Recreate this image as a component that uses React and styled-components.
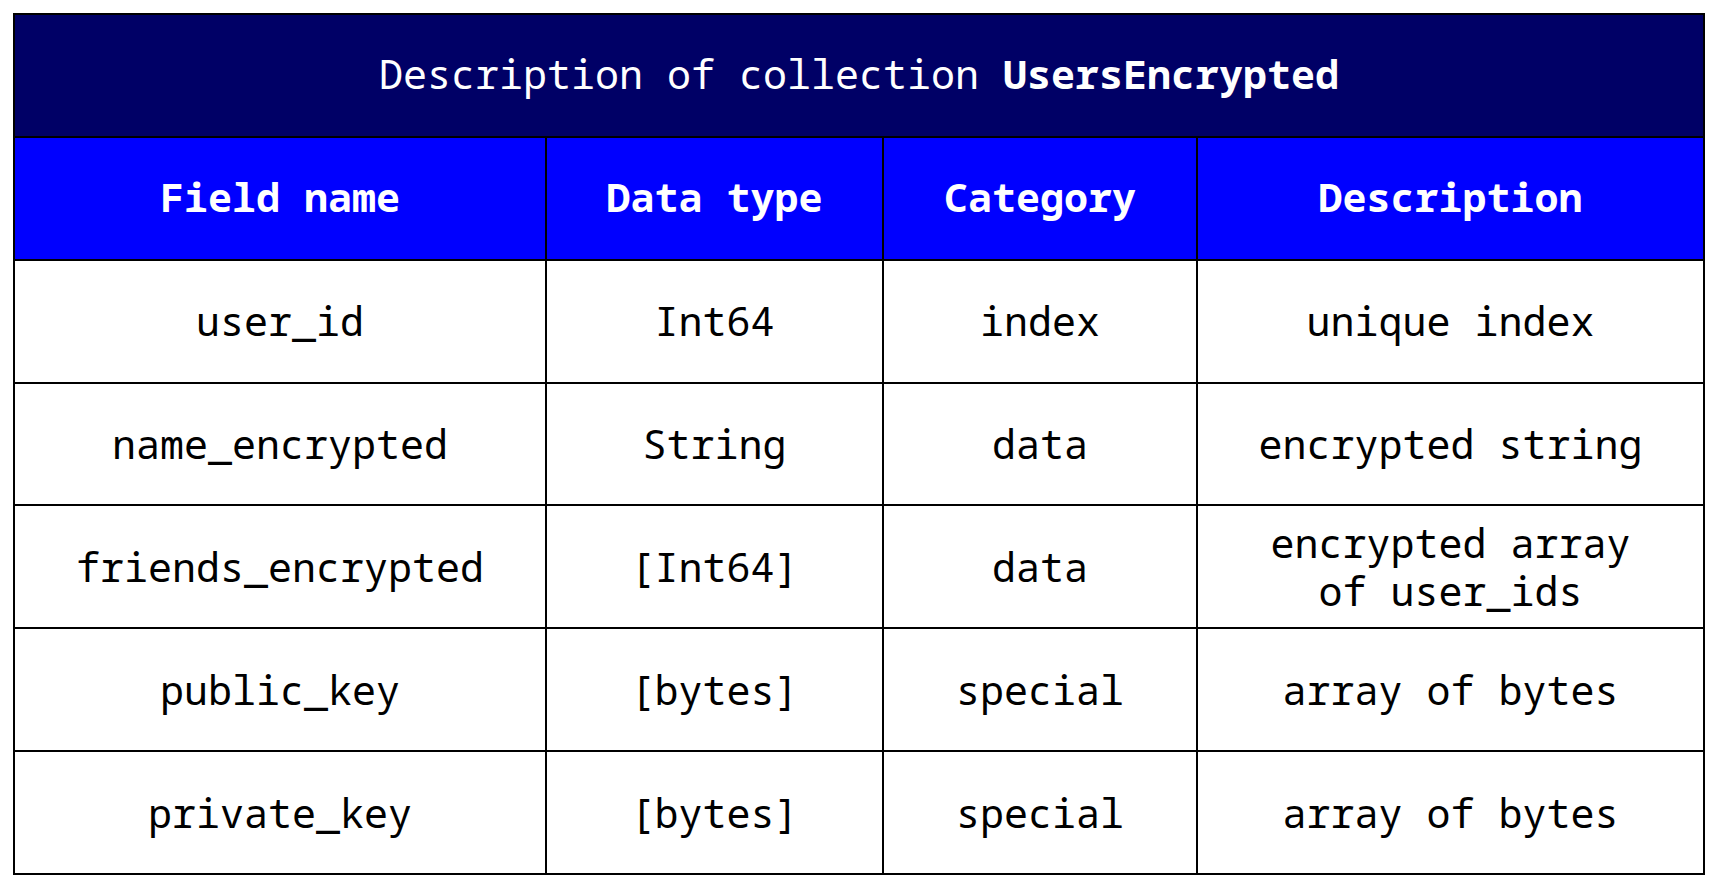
import React from "react";
import styled, { createGlobalStyle } from "styled-components";

const Global = createGlobalStyle`
  html, body { margin: 0; padding: 0; background: #ffffff; }
  body { font-family: "Noto Sans Mono", "DejaVu Sans Mono", "Liberation Mono", monospace; }
`;

const Page = styled.div`
  padding: 13px 0 0 13px;
`;

const Table = styled.div`
  width: 1692px;
  height: 862px;
  box-sizing: border-box;
  display: grid;
  grid-template-columns: 530px 335px 312px 505px;
  grid-template-rows: repeat(7, 1fr);
  gap: 2px;
  padding: 2px;
  background: #000000;
  font-family: "Noto Sans Mono", "DejaVu Sans Mono", "Liberation Mono", monospace;
  font-size: 40px;
`;

const Cell = styled.div`
  display: flex;
  align-items: center;
  justify-content: center;
  text-align: center;
  box-sizing: border-box;
  padding-bottom: ${(p) => (p.$head ? "2px" : "0")};
  background: ${(p) => (p.$head ? "#0000ff" : "#ffffff")};
  color: ${(p) => (p.$head ? "#ffffff" : "#000000")};
  font-weight: ${(p) => (p.$head ? 700 : 400)};
  line-height: 1.2;
  white-space: pre-line;
`;

const Title = styled.div`
  grid-column: 1 / -1;
  display: flex;
  align-items: center;
  justify-content: center;
  box-sizing: border-box;
  padding-bottom: 4px;
  background: #000066;
  color: #ffffff;
  white-space: pre;
`;

const Strong = styled.b`
  font-weight: 700;
`;

const headers = ["Field name", "Data type", "Category", "Description"];
const rows = [
  ["user_id", "Int64", "index", "unique index"],
  ["name_encrypted", "String", "data", "encrypted string"],
  ["friends_encrypted", "[Int64]", "data", "encrypted array\nof user_ids"],
  ["public_key", "[bytes]", "special", "array of bytes"],
  ["private_key", "[bytes]", "special", "array of bytes"],
];

export default function App() {
  return (
    <Page>
      <Global />
      <Table>
        <Title>
          Description of collection <Strong>UsersEncrypted</Strong>
        </Title>
        {headers.map((h) => (
          <Cell key={h} $head>
            {h}
          </Cell>
        ))}
        {rows.map((r, i) =>
          r.map((c, j) => <Cell key={`${i}-${j}`}>{c}</Cell>)
        )}
      </Table>
    </Page>
  );
}
